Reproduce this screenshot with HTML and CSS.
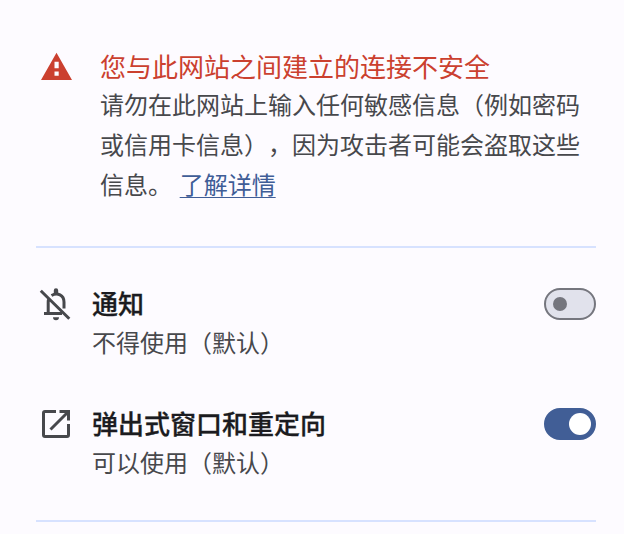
FILE: index.html
```html
<!DOCTYPE html>
<html lang="zh-CN">
<head>
	<meta charset="UTF-8">
	<meta name="viewport" content="width=device-width, initial-scale=1.0">
	<title>网站信息</title>
	<link rel="stylesheet" href="styles.css">
</head>
<body>
	<section class="security">
		<svg class="icon" viewBox="0 0 40 40">
			<path fill="#cb402f" fill-rule="evenodd" d="M5 32L20.500 4.700 36 32zM18.500 13.700v6.600h4.200v-6.600zM18.500 23.500v4.200h4.200v-4.200z"/>
		</svg>
		<div class="security__content">
			<h1 class="security__title">您与此网站之间建立的连接不安全</h1>
			<p class="security__text">请勿在此网站上输入任何敏感信息（例如密码<br>或信用卡信息），因为攻击者可能会盗取这些<br>信息。 <a class="link" href="#">了解详情</a></p>
		</div>
	</section>

	<section class="permissions">
		<div class="permission">
			<svg class="icon" viewBox="0 0 40 40" fill="none" stroke="#47484c" stroke-width="3">
				<path d="M4.800 6.800L33.300 34.800M8 29.600h18M12.200 29.600V18c0-1.500.4-2.800 1-4M15.500 11.500c6-3.600 12.500-.2 12.500 6.500v6.500"/>
				<path fill="#47484c" stroke="none" d="M17.800 11V6.400a2.200 2.200 0 0 1 4.400 0V11zM17 33.200h6a3 3 0 0 1-6 0z"/>
			</svg>
			<div class="permission__content">
				<h2 class="permission__title">通知</h2>
				<p class="permission__state">不得使用（默认）</p>
			</div>
			<button class="toggle" aria-label="通知"></button>
		</div>
		<div class="permission">
			<svg class="icon" viewBox="0 0 40 40" fill="none" stroke="#47484c" stroke-width="3">
				<path d="M20 7.500H9A1.500 1.500 0 0 0 7.500 9v22A1.500 1.500 0 0 0 9 32.500h22a1.500 1.500 0 0 0 1.500-1.500V20M23.500 7.500h9v9M32.500 7.500L14.500 25.500"/>
			</svg>
			<div class="permission__content">
				<h2 class="permission__title">弹出式窗口和重定向</h2>
				<p class="permission__state">可以使用（默认）</p>
			</div>
			<button class="toggle toggle--on" aria-label="弹出式窗口和重定向"></button>
		</div>
	</section>
</body>
</html>
```

FILE: styles.css
```css
* {
	box-sizing: border-box;
}
body {
	margin: 0;
	padding: 48px 28px 0 36px;
	background: #fdfbff;
	color: #47484c;
	font-family: "Liberation Sans", "Noto Sans CJK SC", sans-serif;
	font-size: 24px;
	text-spacing-trim: space-all;
}
h1, h2, p {
	margin: 0;
}
.icon {
	display: block;
	flex: none;
	width: 40px;
	height: 40px;
}
.security {
	display: flex;
	gap: 24px;
	height: 200px;
	border-bottom: 2px solid #d7e2ff;
}
.security__content {
	padding-top: 1px;
}
.security__title {
	margin-bottom: -1px;
	color: #cb402f;
	font-size: 26px;
	font-weight: 400;
	line-height: 38px;
	white-space: nowrap;
}
.security__text {
	line-height: 40px;
	white-space: nowrap;
	word-spacing: 1px;
}
.link {
	color: #3f5d97;
	text-decoration: underline;
	text-decoration-thickness: 1px;
	text-underline-offset: 3px;
}
.permissions {
	height: 274px;
	padding-top: 36px;
	border-bottom: 2px solid #d7e2ff;
}
.permission {
	display: flex;
	height: 120px;
}
.permission__content {
	flex: 1;
	padding: 1px 0 0 16px;
}
.permission__title {
	color: #1b1b20;
	font-size: 26px;
	font-weight: 500;
	line-height: 40px;
	-webkit-text-stroke: .3px;
}
.permission__state {
	line-height: 38px;
}
.toggle {
	display: flex;
	align-items: center;
	width: 52px;
	height: 32px;
	margin-top: 4px;
	padding: 0 7px;
	border: 2px solid #75767e;
	border-radius: 16px;
	background: #e1e2ec;
}
.toggle::before {
	content: "";
	width: 14px;
	height: 14px;
	border-radius: 50%;
	background: #75767e;
}
.toggle--on {
	justify-content: flex-end;
	padding-right: 3px;
	border-color: #415e96;
	background: #415e96;
}
.toggle--on::before {
	width: 22px;
	height: 22px;
	background: #fff;
}
```
